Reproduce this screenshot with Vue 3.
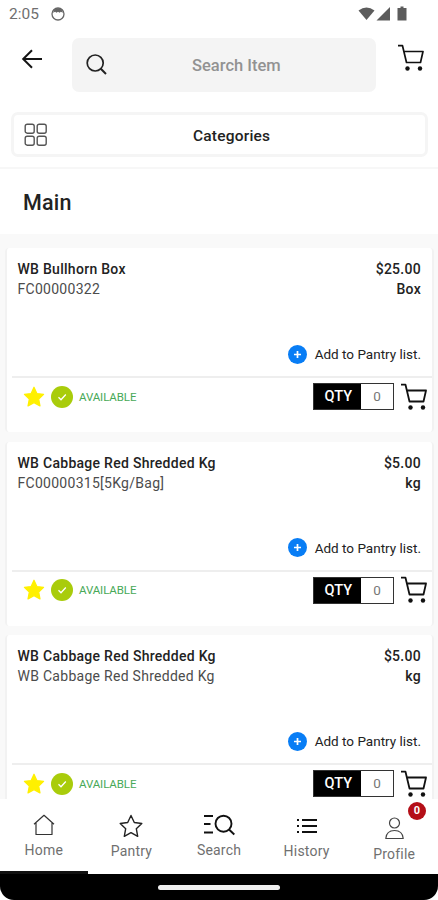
<script setup>
const products = [
  { name: 'WB Bullhorn Box', detail: 'FC00000322', price: '$25.00', unit: 'Box' },
  { name: 'WB Cabbage Red Shredded Kg', detail: 'FC00000315[5Kg/Bag]', price: '$5.00', unit: 'kg' },
  { name: 'WB Cabbage Red Shredded Kg', detail: 'WB Cabbage Red Shredded Kg', price: '$5.00', unit: 'kg' },
]
</script>

<template>
  <div class="screen">
    <div class="status">
      <span class="clock">2:05</span>
      <svg class="face" width="14" height="14" viewBox="0 0 14 14">
        <circle cx="7" cy="7" r="6" fill="none" stroke="#666" stroke-width="1.3" />
        <path d="M2 5.8Q3 1.2 7 1.2T12 5.8L9.8 4.8 8.6 5.8 7 4.8 5.4 5.8 4.2 4.8Z" fill="#666" />
      </svg>
      <span class="grow"></span>
      <svg width="50" height="16" viewBox="0 0 50 16" fill="#5c5c5c">
        <path d="M0.5 4.5Q8.5-1.5 16.5 4.5L8.5 14Z" />
        <path d="M32 1V14.5H18.5Z" />
        <path d="M42.5 0.5h3V2H48.5V14.5H39.5V2H42.5Z" />
      </svg>
    </div>

    <header class="top">
      <svg class="back" width="22" height="20" viewBox="0 0 22 20">
        <path d="M21 10H2M11 1.2L2.200 10l8.800 8.800" fill="none" stroke="#151515" stroke-width="2" />
      </svg>
      <div class="search">
        <svg class="lens" width="22" height="22" viewBox="0 0 22 22" fill="none" stroke="#222" stroke-width="1.7">
          <circle cx="9.2" cy="9" r="8" />
          <path d="M14.800 14.700L20 20" stroke-width="2" />
        </svg>
        <span class="placeholder">Search Item</span>
      </div>
      <svg class="cart header-cart" width="28" height="28" viewBox="0 0 28 28">
        <path d="M1 1.7H5.500L9.500 18.500H23.500L26 7.500H7" fill="none" stroke="#111" stroke-width="1.7" stroke-linejoin="round" />
        <circle cx="10.5" cy="24.5" r="2.2" fill="#111" />
        <circle cx="23" cy="24.5" r="2.2" fill="#111" />
      </svg>
    </header>

    <div class="categories-wrap">
      <div class="categories">
        <svg class="grid" width="24" height="24" viewBox="0 0 24 24" fill="none" stroke="#555" stroke-width="1.4">
          <rect x="1.2" y="1.2" width="9" height="9" rx="2" />
          <rect x="13.2" y="1.2" width="9" height="9" rx="2" />
          <rect x="1.2" y="13.2" width="9" height="9" rx="2" />
          <rect x="13.2" y="13.2" width="9" height="9" rx="2" />
        </svg>
        <span class="cat-label">Categories</span>
      </div>
    </div>

    <div class="heading"><span>Main</span></div>

    <main class="list">
      <article v-for="(p, i) in products" :key="i" class="card">
        <div class="line first"><b class="name">{{ p.name }}</b><b class="price">{{ p.price }}</b></div>
        <div class="line"><span class="detail">{{ p.detail }}</span><b class="unit">{{ p.unit }}</b></div>
        <div class="add">
          <svg width="19" height="19" viewBox="0 0 20 20">
            <circle cx="10" cy="10" r="10" fill="#087df5" />
            <path d="M10 6.3V13.7M6.3 10H13.7" stroke="#fff" stroke-width="1.8" />
          </svg>
          <span>Add to Pantry list.</span>
        </div>
        <div class="actions">
          <svg class="star" width="22" height="22" viewBox="0 0 22 22">
            <path d="M11 1.2L13.9 7.5 20.6 8.3 15.7 13 17 19.9 11 16.6 5 19.9 6.3 13 1.4 8.3 8.1 7.5Z" fill="#fff000" stroke="#fff000" stroke-width="1.2" stroke-linejoin="round" />
          </svg>
          <svg class="check" width="22" height="22" viewBox="0 0 22 22">
            <circle cx="11" cy="11" r="11" fill="#a9cc0b" />
            <path d="M7.5 11.2L10 13.7 14.8 8.500" fill="none" stroke="#fff" stroke-width="1.3" />
          </svg>
          <span class="available">AVAILABLE</span>
          <span class="grow"></span>
          <div class="qty"><span class="qty-label">QTY</span><span class="qty-value">0</span></div>
          <svg class="cart" width="28" height="28" viewBox="0 0 28 28">
            <path d="M1 1.7H5.500L9.500 18.500H23.500L26 7.500H7" fill="none" stroke="#111" stroke-width="1.8" stroke-linejoin="round" />
            <circle cx="10.5" cy="24.5" r="2.2" fill="#111" />
            <circle cx="23" cy="24.5" r="2.2" fill="#111" />
          </svg>
        </div>
      </article>
    </main>

    <nav class="tabs">
      <div class="tab home">
        <svg width="22" height="22" viewBox="0 0 22 22" fill="none" stroke="#333" stroke-width="1.2" stroke-linejoin="round">
          <path d="M1 10.300L11 1.300 21 10.300M3 8.600V20.500H19V8.600" />
        </svg>
        <span>Home</span>
      </div>
      <div class="tab pantry">
        <svg width="24" height="24" viewBox="0 0 24 24" fill="none" stroke="#222" stroke-width="1.4" stroke-linejoin="round">
          <path d="M12 1.5L15.3 8.500 22.800 9.500 17.300 14.700 18.700 22.300 12 18.600 5.300 22.300 6.700 14.700 1.200 9.500 8.700 8.500Z" />
        </svg>
        <span>Pantry</span>
      </div>
      <div class="tab find">
        <svg width="32" height="22" viewBox="0 0 32 22" fill="none" stroke="#111" stroke-width="1.9">
          <path d="M1 2H10M1 10H7.500M1 18.500H10" />
          <circle cx="20.5" cy="9.7" r="8" />
          <path d="M26 15.500L31.300 20.500" />
        </svg>
        <span>Search</span>
      </div>
      <div class="tab history">
        <svg width="22" height="16" viewBox="0 0 22 16" stroke="#111" stroke-width="1.9">
          <path d="M1 2H3M1 8H3M1 14H3M6 2H21M6 8H21M6 14H21" />
        </svg>
        <span>History</span>
      </div>
      <div class="tab profile">
        <svg width="20" height="23" viewBox="0 0 20 23" fill="none" stroke="#444" stroke-width="1.2">
          <circle cx="10.500" cy="6" r="5" />
          <path d="M1.800 21.500Q2.500 13.500 10.500 13.500T19.200 21.500Z" stroke-linejoin="round" />
        </svg>
        <span>Profile</span>
        <i class="badge">0</i>
      </div>
    </nav>
    <div class="indicator"><div class="active"></div></div>
    <div class="system"><div class="pill"></div></div>
  </div>
</template>

<style>
body { background: #fff; }
</style>

<style scoped>
.screen { width: 438px; height: 900px; display: flex; flex-direction: column; overflow: hidden; background: #fff; font-family: Roboto, "Liberation Sans", sans-serif; color: #222; }
.screen * { box-sizing: border-box; }
svg { display: block; flex: none; }
.grow { flex: 1; }

.status { height: 28px; flex: none; display: flex; align-items: center; padding: 0 30px 0 9px; }
.clock { width: 42px; font-size: 15.5px; line-height: 18px; color: #6f6f6f; }

.top { height: 64px; flex: none; display: flex; align-items: flex-start; padding: 10px 12px 0 21px; }
.back { margin-top: 11px; }
.search { width: 304px; height: 54px; margin-left: 29px; border-radius: 7px; background: #f4f4f4; display: flex; align-items: center; padding-left: 14px; }
.placeholder { margin-left: 84px; font-size: 16.5px; font-weight: 500; color: #929292; white-space: nowrap; }
.header-cart { margin-left: 21px; margin-top: 6px; }

.categories-wrap { height: 77px; flex: none; padding: 20px 10px 0 11px; border-bottom: 2px solid #f7f7f7; }
.categories { height: 45px; border: 3px solid #f5f5f5; border-radius: 7px; display: flex; align-items: center; padding-left: 10px; }
.cat-label { margin-left: 145px; padding-top: 2px; font-size: 15.5px; font-weight: 500; letter-spacing: 0.2px; }

.heading { height: 65px; flex: none; display: flex; align-items: center; padding: 2px 0 0 23px; font-size: 21.5px; font-weight: 500; color: #222; letter-spacing: 0.2px; }

.list { height: 565px; flex: none; background: #f9f9f9; overflow: hidden; padding: 14px 4px 0 5px; display: flex; flex-direction: column; gap: 9.5px; }
.card { height: 184px; flex: none; background: #fff; border-left: 2px solid #f2f2f2; border-right: 2px solid #f2f2f2; border-radius: 4px; }
.line { display: flex; justify-content: space-between; align-items: center; height: 20px; padding: 0 11px 0 10.5px; font-size: 14px; line-height: 20px; letter-spacing: 0.28px; white-space: nowrap; }
.first { margin-top: 11px; }
b { font-weight: 500; }
.detail { font-weight: 400; color: #4c4c4c; }
.add { height: 20px; margin-top: 45px; padding-right: 11px; display: flex; justify-content: flex-end; align-items: center; gap: 8px; font-size: 13.5px; color: #222; }
.actions { height: 40px; margin: 12px 0 0 5px; border-top: 2px solid #eee; display: flex; align-items: center; padding: 0 4px 1px 11px; }
.check { margin-left: 6px; }
.available { margin-left: 6px; font-size: 11.5px; letter-spacing: -0.1px; color: #48a957; }
.qty { width: 81px; height: 27px; display: flex; border: 1px solid #333; margin-right: 6px; }
.qty-label { width: 47px; background: #000; color: #fff; font-size: 14.5px; font-weight: 500; line-height: 26px; padding-left: 10.5px; }
.qty-value { flex: 1; text-align: center; font-size: 13.5px; line-height: 24px; color: #777; }

.tabs { height: 72px; flex: none; display: flex; background: #fff; }
.tab { flex: 1; display: flex; flex-direction: column; align-items: center; position: relative; font-size: 14px; color: #707070; letter-spacing: 0.2px; }
.tab span { line-height: 16px; }
.home { padding-top: 15px; }
.home span { margin-top: 6px; }
.pantry { padding-top: 15px; }
.pantry span { margin-top: 5px; }
.find { padding-top: 15px; }
.find span { margin-top: 6px; }
.history { padding-top: 19px; }
.history span { margin-top: 9px; }
.profile { padding-top: 18px; }
.profile span { margin-top: 6px; }
.badge { position: absolute; top: 3px; right: 12px; width: 18px; height: 18px; border-radius: 50%; background: #b40f18; color: #fff; font-style: normal; font-weight: 700; font-size: 11px; line-height: 18px; text-align: center; letter-spacing: 0; }
.indicator { height: 3px; flex: none; }
.active { width: 88px; height: 3px; background: #111; }
.system { height: 26px; flex: none; background: #000; border-radius: 0 0 14px 14px; display: flex; justify-content: center; padding-top: 11px; }
.pill { width: 122px; height: 5px; border-radius: 2.5px; background: #eee; }
</style>
